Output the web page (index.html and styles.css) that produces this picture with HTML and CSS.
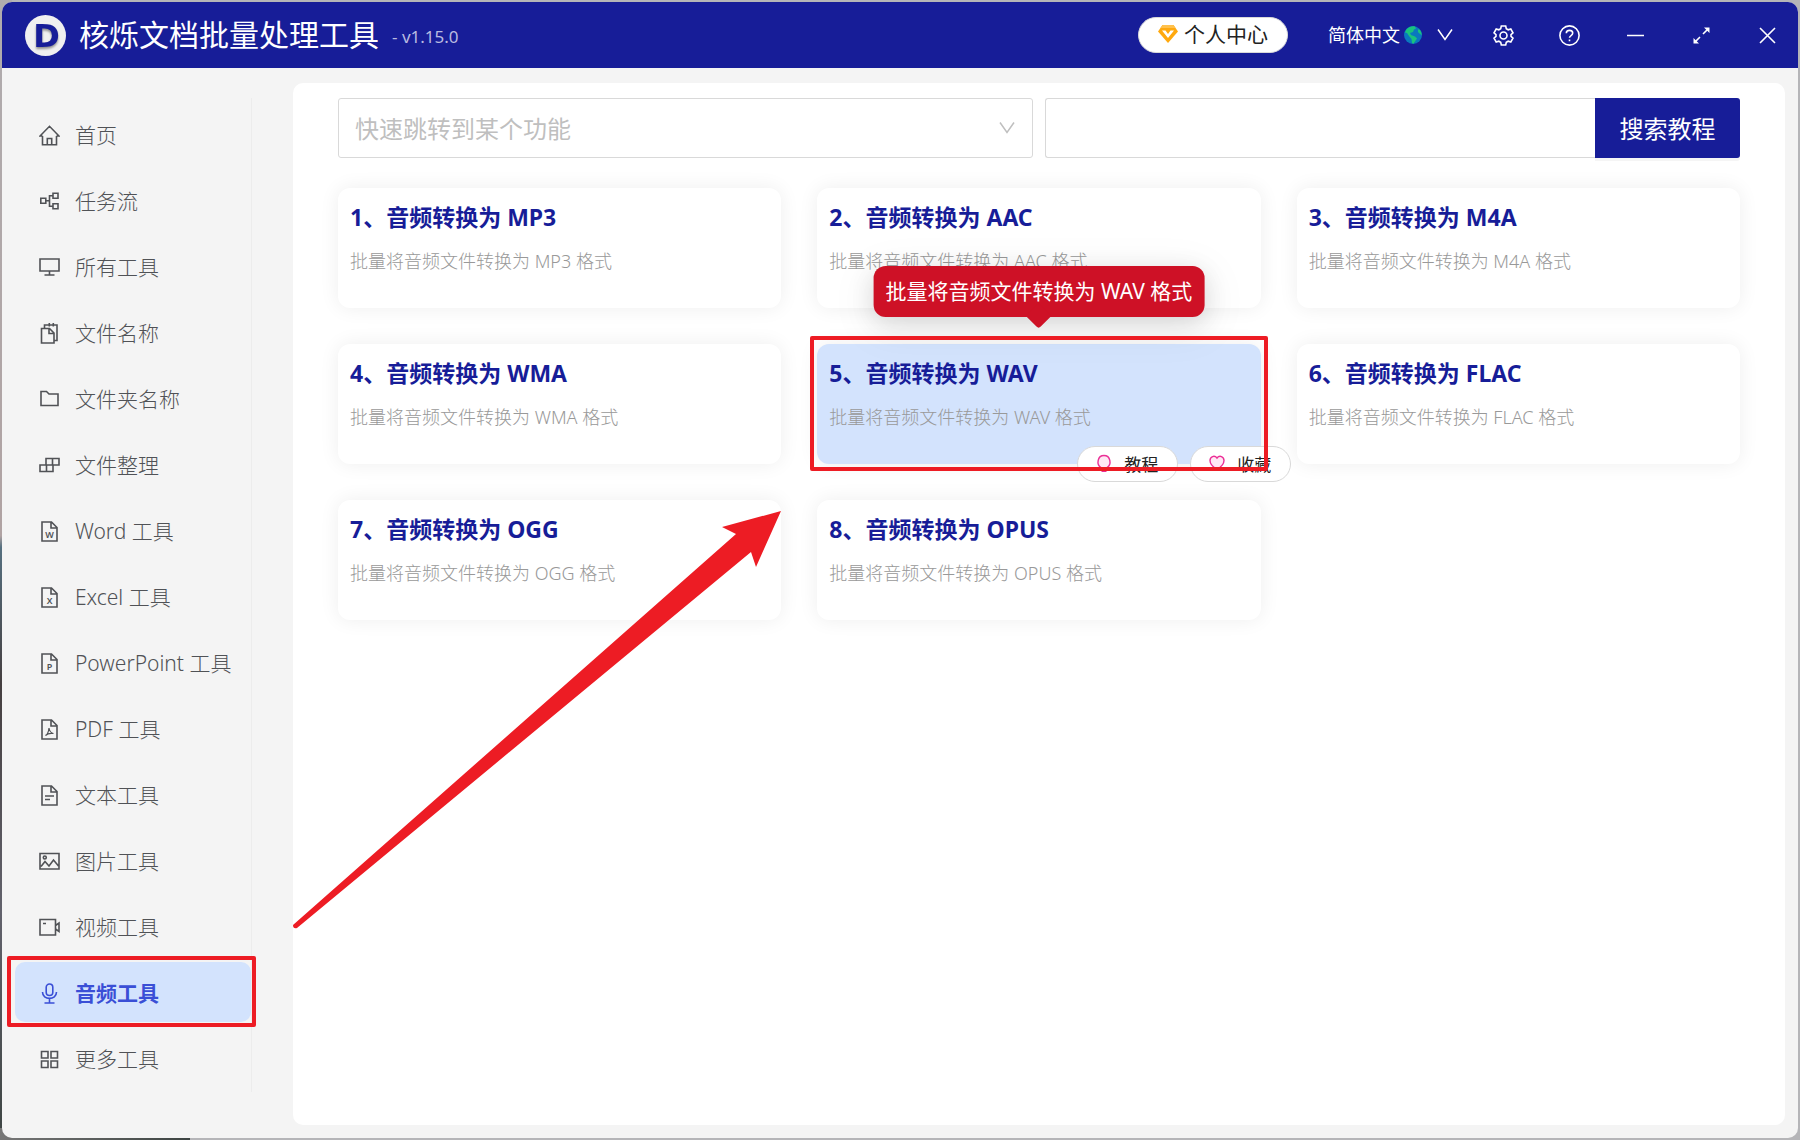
FILE: index.html
```html
<!DOCTYPE html>
<html lang="zh-CN">
<head>
  <meta charset="UTF-8" />
  <meta name="viewport" content="width=device-width, initial-scale=1.0"/>
  <title>核烁文档批量处理工具</title>
  <link rel="stylesheet" href="styles.css">
</head>
<body>
  <div class="window">
    <header class="topbar">
      <svg class="logo" viewBox="0 0 41 41" aria-hidden="true">
        <circle cx="20.5" cy="20.5" r="20.5" fill="#f0f0f0"/>
        <text x="21.5" y="32" text-anchor="middle" class="logo-letter">D</text>
      </svg>
      <h1>核烁文档批量处理工具</h1>
      <span class="version">- v1.15.0</span>

      <div class="top-actions">
        <button class="user-btn">
          <svg class="gem" viewBox="0 0 20 18" aria-hidden="true">
            <path d="M4.5 0h11L20 6.5 10 18 0 6.500z" fill="#ffa90f"/>
            <path d="M4.500 0h11l2 3h-15z" fill="#ffc14d"/>
            <path d="M4 5.500h3.500L10 9l2.500-3.500H16L10 13z" fill="#fff"/>
          </svg>
          个人中心
        </button>
        <label class="lang">
          <select aria-label="语言">
            <option>简体中文</option>
          </select>
          <svg class="globe" viewBox="0 0 18 18" aria-hidden="true">
            <circle cx="9" cy="9" r="9" fill="#0a78be"/>
            <path d="M2 4C4 1 8-.5 11 .4l1 2-2 1-1 2.500-3 1 1 2 4 1.500 2 2-2 3-1.500 2.400-1.500-.8-.5-4L5 10 3 7 1 6.500zM14 3l2.500 1.500L18 9l-2-1-2-2z" fill="#19c37d"/>
          </svg>
          <svg class="chevron" viewBox="0 0 16 16" aria-hidden="true"><path d="M1 2.500l7 10 7-10"/></svg>
        </label>
        <div class="win-btns">
          <button aria-label="设置">
            <svg viewBox="0 0 21 21"><path d="M8.300 1h4.400l.6 2.700 1.900 1.100 2.600-.8 2.200 3.800-2 1.800v1.800l2 1.800-2.200 3.800-2.600-.8-1.900 1.100-.6 2.700H8.300l-.6-2.700-1.900-1.100-2.600.8L1 13.200l2-1.800V9.600L1 7.800 3.200 4l2.600.8 1.900-1.100z"/><circle cx="10.500" cy="10.500" r="3.500"/></svg>
          </button>
          <button aria-label="帮助">
            <svg viewBox="0 0 21 21"><circle cx="10.500" cy="10.500" r="9.600"/><path d="M7.300 8.300c0-4 6.400-3.800 6.400-.2 0 2.600-3.200 2.300-3.200 4.700"/><path d="M10.500 14.500v1.800"/></svg>
          </button>
          <button aria-label="最小化">
            <svg viewBox="0 0 21 21"><path d="M2 10.500h17"/></svg>
          </button>
          <button aria-label="最大化">
            <svg viewBox="0 0 21 21"><path d="M12 9l5-5M9 12l-5 5"/><path d="M13 2.500h5.500V8zM2.500 13v5.500H8z" class="solid"/></svg>
          </button>
          <button aria-label="关闭">
            <svg viewBox="0 0 21 21"><path d="M3 3l15 15M18 3L3 18"/></svg>
          </button>
        </div>
      </div>
    </header>

    <div class="body">
      <nav class="sidebar">
        <a href="#"><svg viewBox="0 0 21 21"><path d="M3.500 11H1l9.500-9.700L20 11h-2.500M3.500 11v8.700h14V11M8.300 19.500v-6h4.400v6"/></svg>首页</a>
        <a href="#"><svg viewBox="0 0 21 21"><path d="M1.800 7.200h5v5h-5zM14 2.200h5v5h-5zM14 12.700h5v5h-5zM7 9.700h3.500M14 4.700h-3.500v10.500H14"/></svg>任务流</a>
        <a href="#"><svg viewBox="0 0 21 21"><path d="M1 2h19v12H1zM10.500 14v4M5.500 18h10"/></svg>所有工具</a>
        <a href="#"><svg viewBox="0 0 21 21"><path d="M2.500 5.500h8l4.500 4.500v10H2.500zM10 5.500v5h5M5.500 5V2H18v15.500h-3M10.300 0v3.500M14.300 0v3.500"/></svg>文件名称</a>
        <a href="#"><svg viewBox="0 0 21 21"><path d="M2 2.500h5.500L10 5h9v11.500H2z"/></svg>文件夹名称</a>
        <a href="#"><svg viewBox="0 0 21 21"><path d="M1 10h13v6.500H1zM7 3.500h13V10H7zM7.500 10v6.500M13.500 3.500V10"/></svg>文件整理</a>
        <a href="#"><svg viewBox="0 0 21 21"><path d="M3 1h9.500L18 6.500V20H3zM12 1v6h6"/><text x="10.500" y="16.500">W</text></svg>Word 工具</a>
        <a href="#"><svg viewBox="0 0 21 21"><path d="M3 1h9.500L18 6.500V20H3zM12 1v6h6"/><text x="10.500" y="17">X</text></svg>Excel 工具</a>
        <a href="#"><svg viewBox="0 0 21 21"><path d="M3 1h9.500L18 6.500V20H3zM12 1v6h6"/><text x="10.500" y="17">P</text></svg>PowerPoint 工具</a>
        <a href="#"><svg viewBox="0 0 21 21"><path d="M3 1h9.500L18 6.500V20H3zM12 1v6h6"/><path class="fine" d="M10 9c-.5 4-1.500 6.500-3.500 7.500 2-2 5-2.500 8-2-2.500-.5-4-2-4.500-5.500z"/></svg>PDF 工具</a>
        <a href="#"><svg viewBox="0 0 21 21"><path d="M3 1h9.500L18 6.500V20H3zM12 1v6h6M6 11h9M6 14.500h5"/></svg>文本工具</a>
        <a href="#"><svg viewBox="0 0 21 21"><path d="M1 2.500h19v15.500H1zM2 15.500l4-5 4 4.500 4.500-6 5 6"/><circle cx="5.800" cy="6.500" r="1.500"/></svg>图片工具</a>
        <a href="#"><svg viewBox="0 0 21 21"><path d="M1 2.500h15.500v15.500H1zM4 6.500h3M16.500 8.500L20 6v8.500L16.500 12"/></svg>视频工具</a>
        <a href="#" class="active"><svg viewBox="0 0 21 21"><rect x="7.200" y="1" width="6.600" height="11.500" rx="3.300"/><path d="M3.500 9c0 8.500 14 8.500 14 0M10.500 15.500V20M5.500 20h10"/></svg>音频工具</a>
        <a href="#"><svg viewBox="0 0 21 21"><path d="M2.500 2.500H9V9H2.500zM12 2.500h6.500V9H12zM2.500 12H9v6.500H2.500zM12 12h6.500v6.500H12z"/></svg>更多工具</a>
      </nav>

      <main class="panel">
        <div class="search-row">
          <div class="jump">
            <select aria-label="快速跳转到某个功能">
              <option>快速跳转到某个功能</option>
            </select>
            <svg class="chevron" viewBox="0 0 16 16" aria-hidden="true"><path d="M1 2.500l7 10 7-10"/></svg>
          </div>
          <div class="search">
            <input type="text" aria-label="搜索教程">
            <button>搜索教程</button>
          </div>
        </div>

        <div class="cards">
          <article class="card">
            <h2>1、音频转换为 MP3</h2>
            <p>批量将音频文件转换为 MP3 格式</p>
          </article>
          <article class="card">
            <h2>2、音频转换为 AAC</h2>
            <p>批量将音频文件转换为 AAC 格式</p>
          </article>
          <article class="card">
            <h2>3、音频转换为 M4A</h2>
            <p>批量将音频文件转换为 M4A 格式</p>
          </article>
          <article class="card">
            <h2>4、音频转换为 WMA</h2>
            <p>批量将音频文件转换为 WMA 格式</p>
          </article>
          <article class="card selected">
            <h2>5、音频转换为 WAV</h2>
            <p>批量将音频文件转换为 WAV 格式</p>
            <div class="tooltip" role="tooltip">批量将音频文件转换为 WAV 格式</div>
            <div class="card-actions">
              <button>
                <svg viewBox="0 0 16 18"><path d="M5 13.500C0 10.500 1.500 1.500 8 1.500s8 9 3 12v2H5zM5.500 17.300h5"/></svg>
                教程
              </button>
              <button>
                <svg viewBox="0 0 16 18"><path d="M8 4C5.500.8 1 2.500 1 6.500c0 3.500 3 6.500 7 9 4-2.500 7-5.500 7-9C15 2.500 10.500.8 8 4z"/></svg>
                收藏
              </button>
            </div>
          </article>
          <article class="card">
            <h2>6、音频转换为 FLAC</h2>
            <p>批量将音频文件转换为 FLAC 格式</p>
          </article>
          <article class="card">
            <h2>7、音频转换为 OGG</h2>
            <p>批量将音频文件转换为 OGG 格式</p>
          </article>
          <article class="card">
            <h2>8、音频转换为 OPUS</h2>
            <p>批量将音频文件转换为 OPUS 格式</p>
          </article>
        </div>

        <svg class="arrow" viewBox="0 0 490 430" aria-hidden="true">
          <path d="M0 422L443 31 429 24 488 8 463 64 458 49 4 425Q0 426 0 422z"/>
        </svg>
      </main>
    </div>
  </div>
</body>
</html>
```
FILE: styles.css
```css
* {
  margin: 0;
  padding: 0;
  box-sizing: border-box;
}

body {
  height: 100vh;
  padding: 2px;
  background: linear-gradient(90deg, #777 0, #3d4442 190px, #b5b5b8 190px) bottom / 100% 12px no-repeat,
    linear-gradient(#b0acae 0, #b0a3a3 47%, #567080 48%, #453f40 60%, #62626c 80%, #3d4442 100%) left / 12px 100% no-repeat,
    #b5b5b8;
  font-family: "Noto Sans", "Noto Sans CJK SC", sans-serif;
  color: #606266;
}

button, input, select {
  font-family: inherit;
  color: inherit;
  border: none;
  background: none;
  outline: none;
}

button {
  cursor: pointer;
}

select {
  appearance: none;
}

svg {
  flex: none;
  fill: none;
  stroke: currentColor;
}

.window {
  display: flex;
  flex-direction: column;
  height: 100%;
  border-radius: 10px;
  background-color: #f4f4f4;
  overflow: hidden;
}

/* 顶部标题栏 */
.topbar {
  display: flex;
  align-items: center;
  height: 66px;
  padding: 0 10px 0 23px;
  background-color: #171d98;
  color: #fff;
  flex: none;
}

.logo {
  width: 41px;
  height: 41px;
  margin-right: 13px;
  stroke: none;
}

.logo-letter {
  font: bold 32px "DejaVu Sans", sans-serif;
  fill: #171d98;
  filter: drop-shadow(0 2px 1px rgba(0, 0, 0, 0.4));
}

h1 {
  font-size: 30px;
  font-weight: 400;
  line-height: 40px;
}

.version {
  margin: 2px 0 0 13px;
  font-size: 17px;
  color: #b9bbe0;
}

.top-actions {
  display: flex;
  align-items: center;
  margin-left: auto;
}

.user-btn {
  display: flex;
  align-items: center;
  justify-content: center;
  gap: 6px;
  width: 150px;
  height: 36px;
  padding-bottom: 2px;
  border: 1px solid #d9d9d9;
  border-radius: 18px;
  background-color: #fff;
  color: #222;
  font-size: 21px;
  line-height: 30px;
}

.gem {
  width: 20px;
  height: 18px;
  stroke: none;
}

.lang {
  display: flex;
  align-items: center;
  margin-left: 40px;
}

.lang select {
  font-size: 18px;
  line-height: 28px;
}

.globe {
  width: 18px;
  height: 18px;
  margin: 0 15px 0 4px;
  stroke: none;
}

.chevron {
  width: 16px;
  height: 16px;
  stroke-width: 1.5;
}

.win-btns {
  display: flex;
  gap: 24px;
  margin-left: 29px;
}

.win-btns button {
  display: flex;
  align-items: center;
  justify-content: center;
  width: 42px;
  height: 42px;
}

.win-btns svg {
  width: 21px;
  height: 21px;
  stroke-width: 1.6;
}

.win-btns .solid {
  fill: currentColor;
  stroke: none;
}

.body {
  display: flex;
  flex: 1;
  min-height: 0;
  padding: 15px 13px 13px;
}

/* 左侧菜单 */
.sidebar {
  display: flex;
  flex-direction: column;
  gap: 6px;
  width: 237px;
  margin: 15px 41px 33px 0;
  padding-top: 6px;
  border-right: 1px solid #ececec;
}

.sidebar a {
  display: flex;
  align-items: center;
  gap: 15px;
  height: 60px;
  padding: 2px 0 0 24px;
  border-radius: 10px;
  color: #505256;
  font-size: 21px;
  font-weight: 300;
  line-height: 30px;
  text-decoration: none;
}

.sidebar svg {
  width: 21px;
  height: 21px;
  stroke-width: 1.6;
}

.sidebar text {
  font-size: 9px;
  font-weight: 600;
  text-anchor: middle;
  fill: currentColor;
  stroke: none;
}

.sidebar .fine {
  stroke-width: 1.2;
}

.sidebar .active {
  position: relative;
  background-color: #d3e3fd;
  color: #3a4fd6;
  font-weight: 700;
}

.active::after,
.selected::after {
  content: "";
  position: absolute;
  inset: -6px -5px -5px -8px;
  border: 4px solid #ed1c24;
  border-radius: 2px;
  pointer-events: none;
}

/* 主面板 */
.panel {
  position: relative;
  flex: 1;
  padding: 15px 45px;
  border-radius: 10px;
  background-color: #fff;
}

.search-row {
  display: flex;
  gap: 12px;
  margin-bottom: 30px;
}

.jump,
.search {
  display: flex;
  flex: 1;
  height: 60px;
}

.jump {
  position: relative;
}

.jump select {
  width: 100%;
  padding: 0 16px;
  border: 1px solid #d9d9d9;
  border-radius: 3px;
  color: #bfbfbf;
  font-size: 24px;
}

.jump .chevron {
  position: absolute;
  right: 18px;
  top: 22px;
  color: #bfbfbf;
}

.search input {
  flex: 1;
  min-width: 0;
  padding: 0 16px;
  border: 1px solid #d9d9d9;
  border-right: none;
  border-radius: 3px 0 0 3px;
  font-size: 24px;
}

.search button {
  width: 145px;
  padding-bottom: 2px;
  border-radius: 0 3px 3px 0;
  background-color: #171d98;
  box-shadow: 0 3px 0 rgba(0, 0, 0, 0.04);
  color: #fff;
  font-size: 24px;
}

.cards {
  display: grid;
  grid-template-columns: repeat(3, 1fr);
  gap: 36px;
}

.card {
  height: 120px;
  padding: 13px 12px;
  border-radius: 12px;
  background-color: #fff;
  box-shadow: 0 0 20px rgba(0, 0, 0, 0.07);
}

.card h2 {
  margin-bottom: 14px;
  color: #171d98;
  font-size: 23px;
  font-weight: 700;
  line-height: 32px;
}

.card p {
  color: #999;
  font-size: 18px;
  font-weight: 300;
  line-height: 28px;
}

.selected {
  position: relative;
  z-index: 1;
  background-color: #d3e3fd;
}

.selected::after {
  inset: -8px -7px -7px;
}

.tooltip {
  position: absolute;
  left: 50%;
  bottom: calc(100% + 27px);
  transform: translateX(-50%);
  padding: 10px 12px;
  border-radius: 12px;
  background-color: #ce1126;
  box-shadow: 0 9px 42px 8px rgba(0, 0, 0, 0.05), 0 6px 24px rgba(0, 0, 0, 0.12);
  color: #fff;
  font-size: 21px;
  line-height: 31px;
  white-space: nowrap;
}

.tooltip::after {
  content: "";
  position: absolute;
  left: 50%;
  bottom: -8px;
  width: 18px;
  height: 18px;
  border-radius: 0 0 3px 0;
  background-color: #ce1126;
  transform: translateX(-50%) rotate(45deg);
}

.card-actions {
  display: flex;
  gap: 12px;
  position: absolute;
  right: -30px;
  bottom: -18px;
}

.card-actions button {
  display: flex;
  align-items: center;
  justify-content: center;
  gap: 12px;
  width: 101px;
  height: 36px;
  padding-bottom: 2px;
  border: 1px solid #d9d9d9;
  border-radius: 18px;
  background-color: #fff;
  color: #222;
  font-size: 17px;
}

.card-actions svg {
  width: 16px;
  height: 18px;
  fill: #ffe8f4;
  stroke: #eb2f96;
  stroke-width: 1.4;
}

.arrow {
  position: absolute;
  left: 0;
  top: 420px;
  width: 490px;
  height: 430px;
  fill: #ed1c24;
  stroke: none;
}
```
